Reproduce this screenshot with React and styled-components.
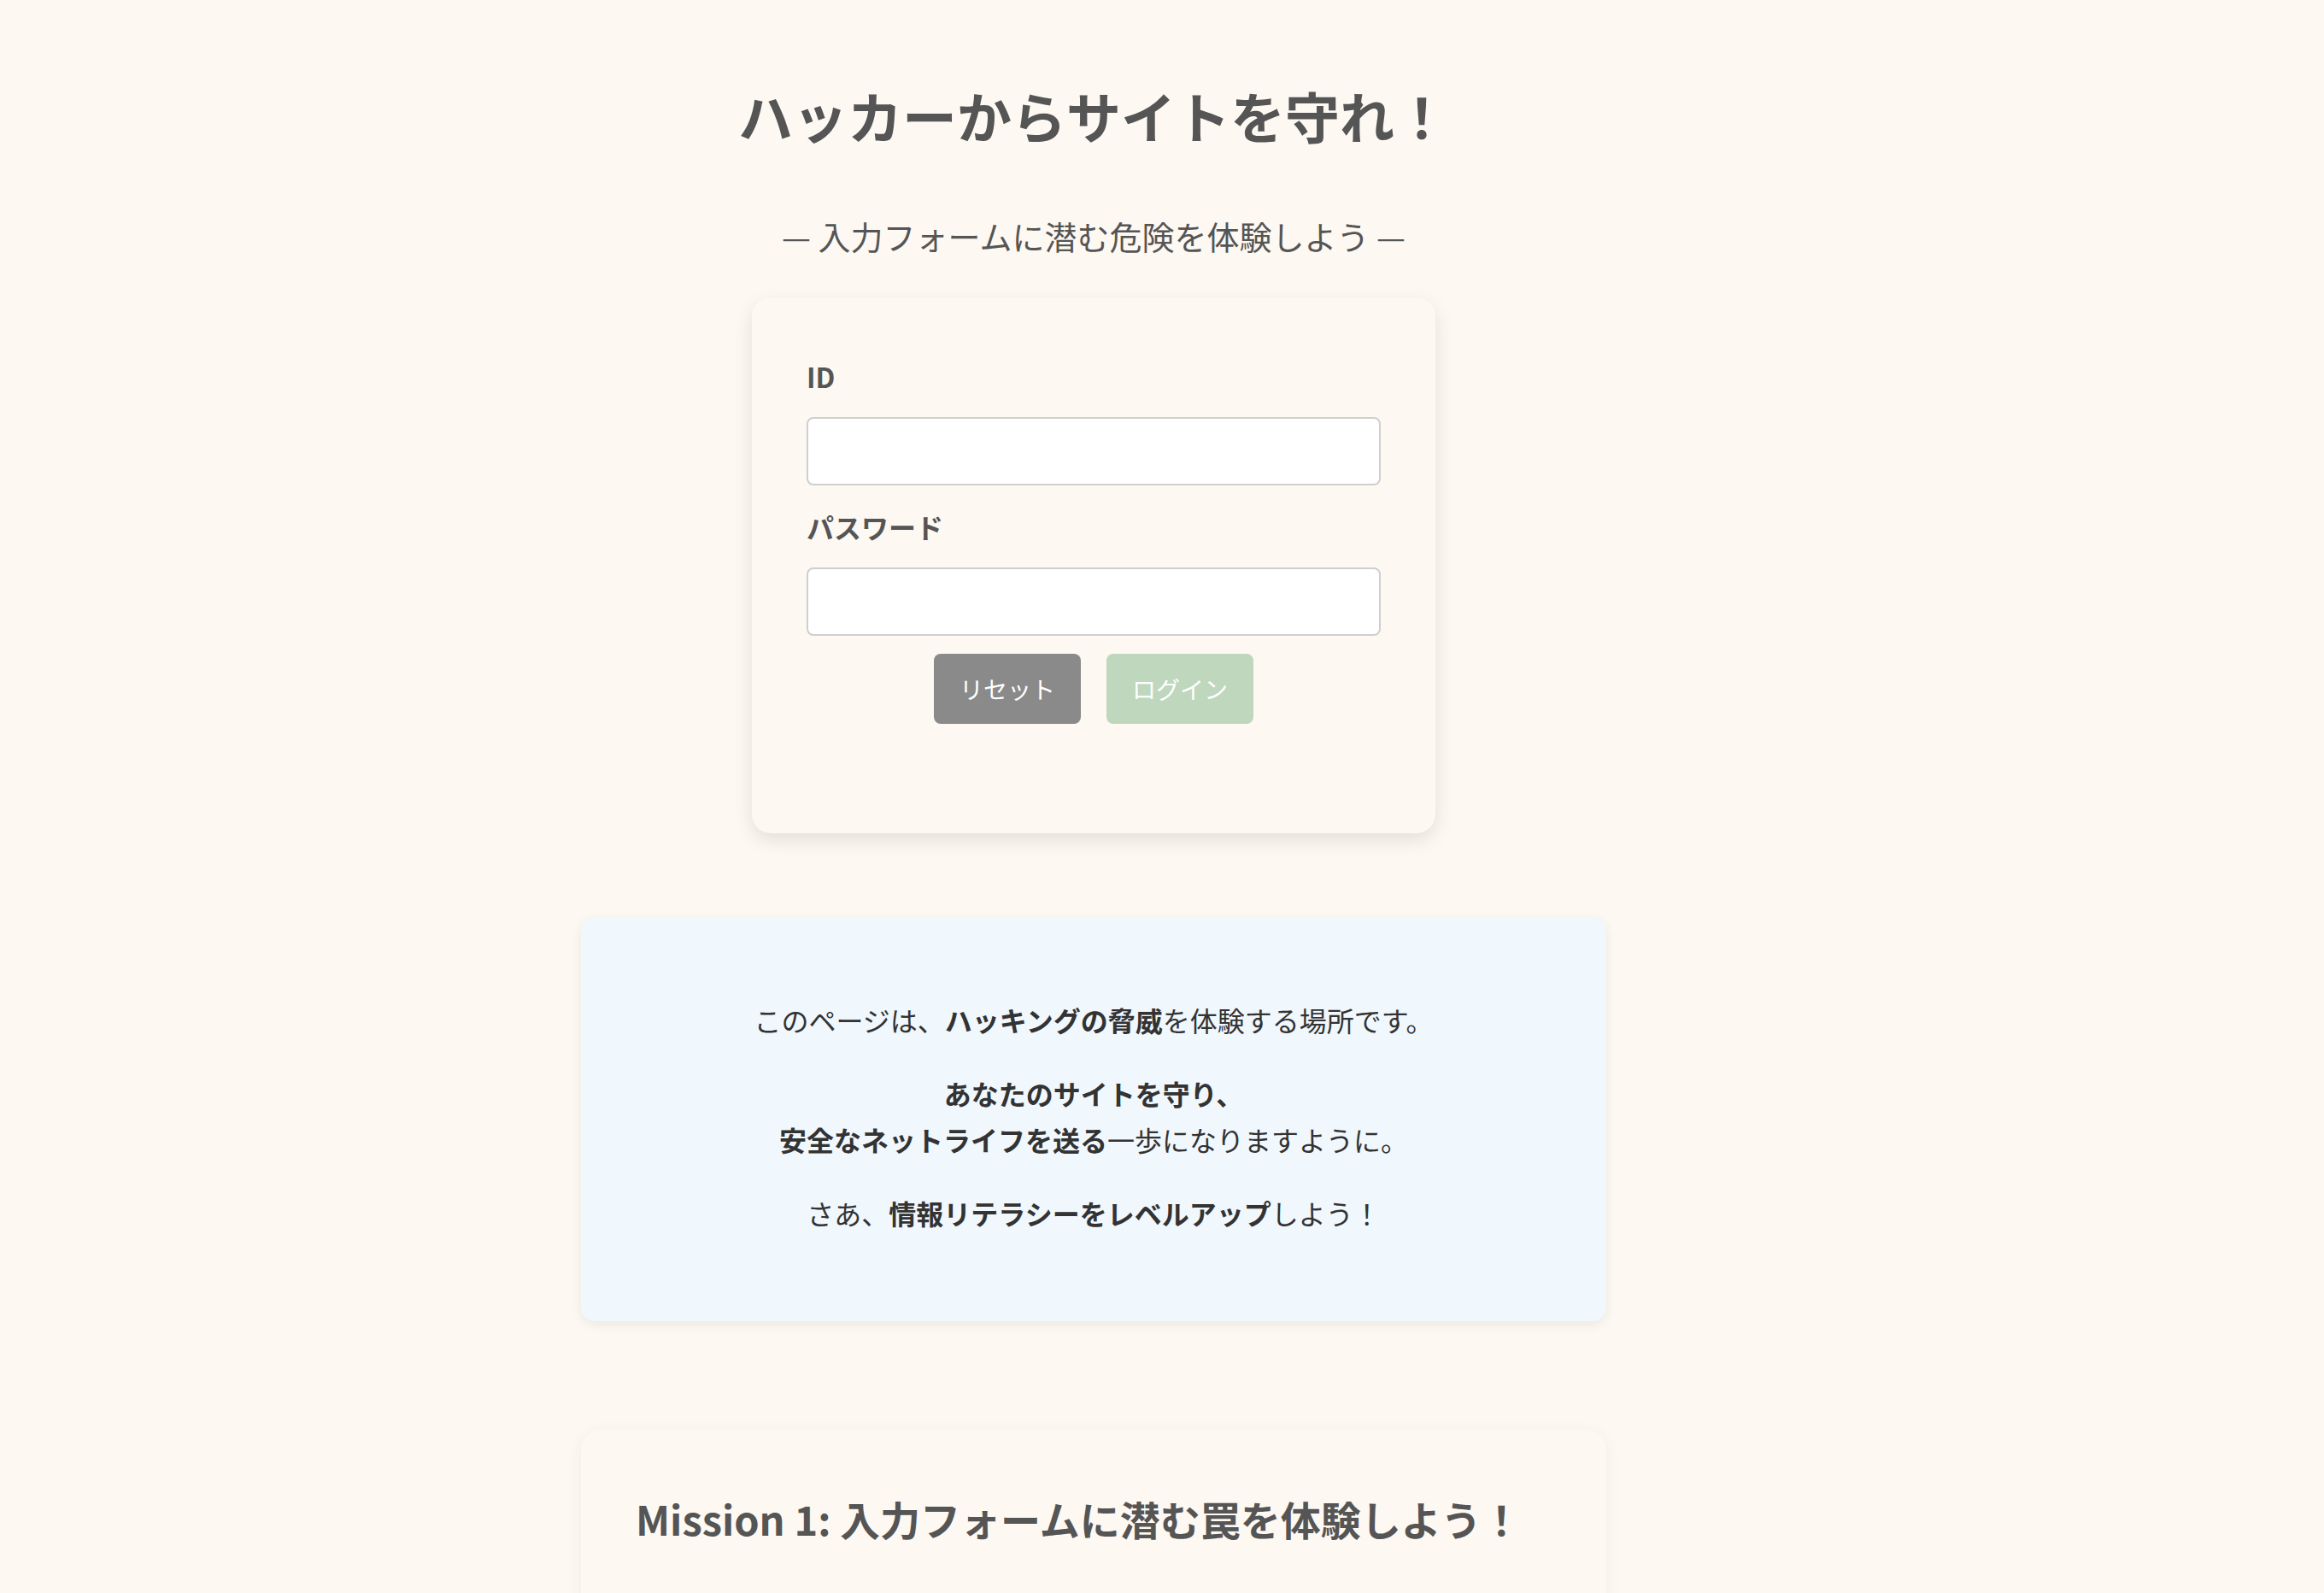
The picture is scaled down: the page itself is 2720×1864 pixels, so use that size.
import styled, { createGlobalStyle } from "styled-components";

const GlobalStyle = createGlobalStyle`
  body {
    margin: 0;
    background: #fdf8f2;
    font-family: "Noto Sans CJK JP", "Noto Sans", sans-serif;
    color: #555;
  }
`;

const App = () => {
  return (
    <Page>
      <GlobalStyle />
      <Container>
        <Title>ハッカーからサイトを守れ！</Title>
        <Subtitle>— 入力フォームに潜む危険を体験しよう —</Subtitle>

        <LoginCard>
          <Label htmlFor="id">ID</Label>
          <Input id="id" type="text" />
          <Label htmlFor="password">パスワード</Label>
          <Input id="password" type="password" />
          <ButtonRow>
            <Button type="button" tone="reset">
              リセット
            </Button>
            <Button type="button" tone="login" disabled>
              ログイン
            </Button>
          </ButtonRow>
        </LoginCard>

        <InfoBox>
          <InfoText>
            このページは、<b>ハッキングの脅威</b>を体験する場所です。
          </InfoText>
          <InfoText>
            <b>あなたのサイトを守り、</b>
            <br />
            <b>安全なネットライフを送る</b>一歩になりますように。
          </InfoText>
          <InfoText>
            さあ、<b>情報リテラシーをレベルアップ</b>しよう！
          </InfoText>
        </InfoBox>

        <MissionCard>
          <MissionTitle>Mission 1: 入力フォームに潜む罠を体験しよう！</MissionTitle>
        </MissionCard>
      </Container>
    </Page>
  );
};

const Page = styled.div`
  width: 2560px;
  padding-bottom: 120px;
`;

const Container = styled.div`
  width: 1200px;
  margin: 0 auto;
  display: flex;
  flex-direction: column;
  align-items: center;
`;

const Title = styled.h1`
  margin: 96px 0 0;
  font-size: 64px;
  line-height: 76px;
  font-weight: 700;
  color: #555;
  text-align: center;
`;

const Subtitle = styled.p`
  margin: 77px 0 0;
  font-size: 38px;
  line-height: 54px;
  color: #555;
  text-align: center;
`;

const LoginCard = styled.form`
  box-sizing: border-box;
  width: 800px;
  margin-top: 45px;
  padding: 68px 64px 128px;
  background: #fdf8f2;
  border-radius: 22px;
  box-shadow: 0 8px 22px rgba(0, 0, 0, 0.1);
  display: flex;
  flex-direction: column;
`;

const Label = styled.label`
  font-size: 32px;
  line-height: 48px;
  font-weight: 700;
  color: #555;
  margin-bottom: 24px;
`;

const Input = styled.input`
  box-sizing: border-box;
  width: 100%;
  height: 80px;
  margin: 0 0 24px;
  padding: 0 20px;
  font-size: 30px;
  background: #fff;
  border: 2px solid #cfcfcf;
  border-radius: 8px;
  outline: none;
`;

const ButtonRow = styled.div`
  display: flex;
  justify-content: center;
  gap: 30px;
  margin-top: -3px;
`;

const Button = styled.button`
  box-sizing: border-box;
  height: 82px;
  padding: 0 30px;
  font-family: inherit;
  font-size: 28px;
  color: #fff;
  border: none;
  border-radius: 8px;
  background: ${({ tone }) => (tone === "login" ? "#bfd7bd" : "#8a8a8a")};
  cursor: pointer;
  &:disabled {
    cursor: not-allowed;
  }
`;

const InfoBox = styled.div`
  box-sizing: border-box;
  width: 1200px;
  margin-top: 98px;
  padding: 61px 40px 68px;
  background: #f0f7fd;
  border-radius: 16px;
  box-shadow: 0 4px 14px rgba(0, 0, 0, 0.07);
  text-align: center;
`;

const InfoText = styled.p`
  margin: 32px 0;
  font-size: 32px;
  line-height: 54px;
  color: #333;
  b {
    font-weight: 700;
  }
`;

const MissionCard = styled.section`
  box-sizing: border-box;
  width: 1200px;
  margin-top: 127px;
  padding: 60px 64px 200px;
  background: #fdf8f2;
  border-radius: 24px;
  box-shadow: 0 4px 20px rgba(0, 0, 0, 0.05);
`;

const MissionTitle = styled.h2`
  margin: 0;
  font-size: 47px;
  line-height: 88px;
  font-weight: 700;
  color: #555;
`;

export default App;
